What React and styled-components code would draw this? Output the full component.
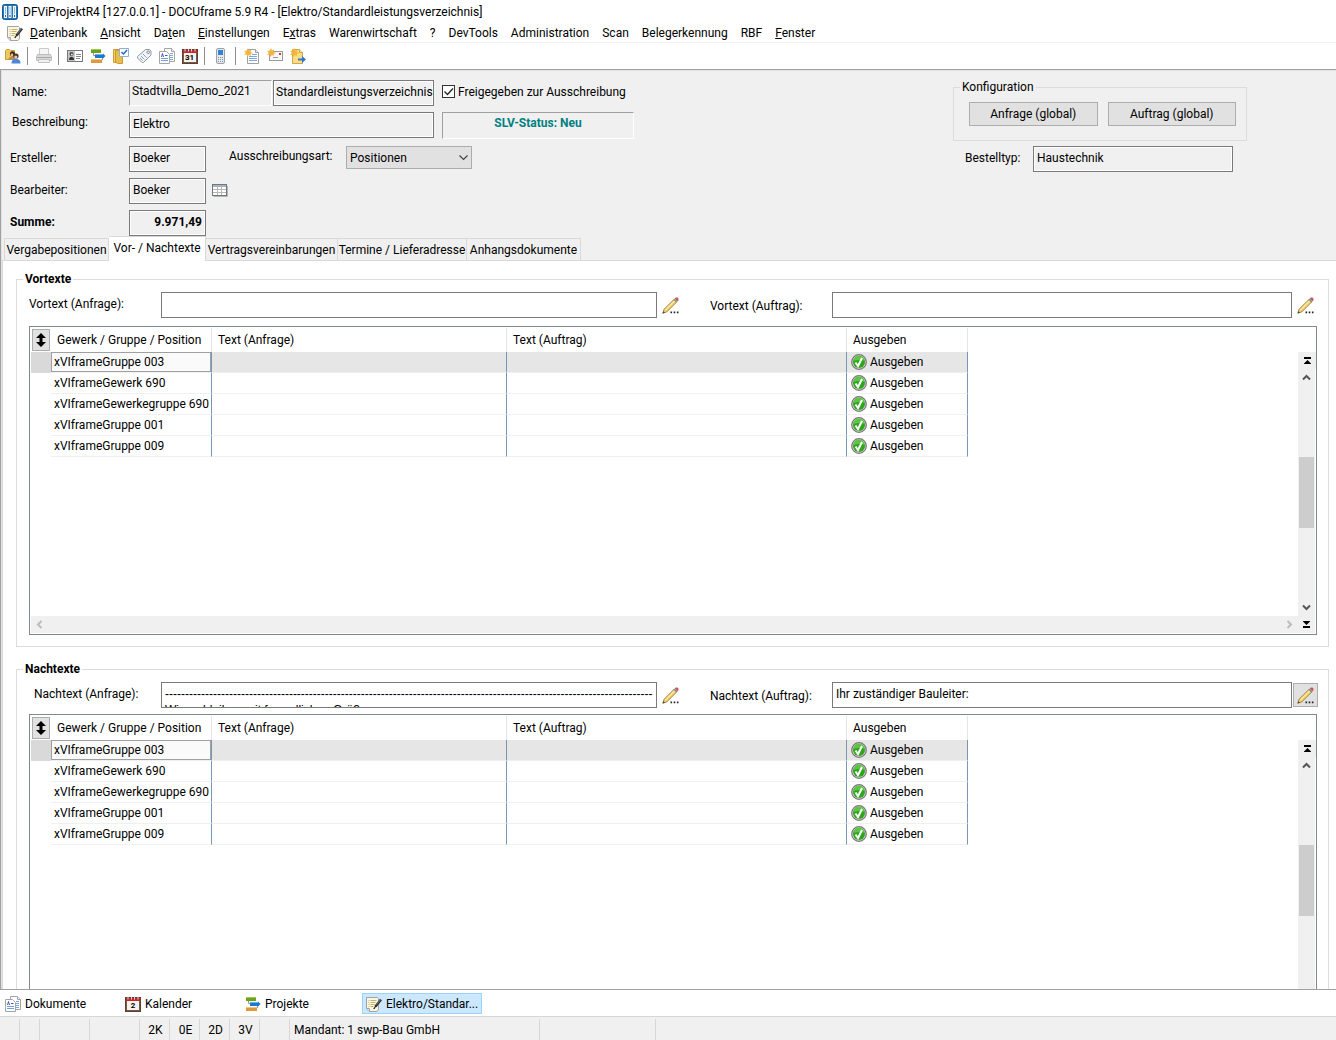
import React from "react";
import styled, { createGlobalStyle, css } from "styled-components";

const GlobalStyle = createGlobalStyle`
  *, *::before, *::after { box-sizing: border-box; }
  body {
    margin: 0;
    background: #fff;
    color: #000;
    font: 12px/16px Roboto, "Open Sans", sans-serif;
  }
  button, input, select, textarea {
    font: inherit;
    color: inherit;
    margin: 0;
    border-radius: 0;
  }
  svg { flex: none; }
`;

/* ---------- window frame ---------- */

const Window = styled.div`
  display: flex;
  flex-direction: column;
  height: 100vh;
  overflow: hidden;
`;

const TitleBar = styled.header`
  display: flex;
  align-items: center;
  gap: 5px;
  height: 24px;
  padding-left: 2px;
  flex: none;
`;

const Title = styled.h1`
  margin: 0;
  font-size: 12px;
  font-weight: 400;
  white-space: nowrap;
`;

const MenuBar = styled.nav`
  display: flex;
  align-items: center;
  height: 19px;
  padding-left: 7px;
  flex: none;
  border-bottom: 1px solid #f0f0f0;
`;

const MenuItem = styled.button`
  border: 0;
  padding: 0 6px 0 7px;
  background: none;
  line-height: 18px;
  white-space: nowrap;
`;

const ToolBar = styled.div`
  display: flex;
  align-items: center;
  height: 26px;
  padding-left: 1px;
  flex: none;
`;

const ToolButton = styled.button`
  display: grid;
  place-items: center;
  width: 23px;
  height: 22px;
  padding: 0;
  border: 0;
  background: none;
`;

const ToolDivider = styled.span`
  width: 1px;
  height: 18px;
  margin: 0 4px 0 3px;
  background: #8d8d8d;
`;

const Workspace = styled.main`
  flex: 1;
  min-height: 0;
  display: flex;
  flex-direction: column;
  overflow: hidden;
  background: #f0f0f0;
  border-top: 1px solid #a0a0a0;
  border-left: 1px solid #a0a0a0;
  border-bottom: 1px solid #a0a0a0;
  box-shadow: inset 1px 1px 0 #e3e3e3;
`;

/* ---------- head form ---------- */

const FormHead = styled.section`
  display: flex;
  justify-content: space-between;
  padding: 10px 89px 0 9px;
  flex: none;
`;

const FormColumn = styled.div`
  display: flex;
  flex-direction: column;
  gap: 6px;
`;

const FormRow = styled.div`
  display: flex;
  align-items: flex-start;
  height: 26px;
  margin-bottom: ${(p) => (p.$spaced ? "2px" : "0")};
`;

const labelLines = { tight: "20px", normal: "24px", low: "28px" };

const Label = styled.label`
  flex: none;
  width: ${(p) => p.$width || "auto"};
  padding-left: ${(p) => p.$indent || "0"};
  line-height: ${(p) => labelLines[p.$line || "normal"]};
  font-weight: ${(p) => (p.$bold ? 700 : 400)};
  white-space: nowrap;
`;

const TextField = styled.input`
  width: ${(p) => p.$width};
  height: 26px;
  padding: 0 3px 2px;
  border: 1px solid #7a7a7a;
  box-shadow: inset 0 0 0 1px #fff;
  background: #f0f0f0;
  outline: 0;
  font-weight: ${(p) => (p.$bold ? 700 : 400)};
  text-align: ${(p) => (p.$bold ? "right" : "left")};
`;

const SunkenField = styled(TextField)`
  margin-right: 1px;
  padding: 0 2px 4px;
  border-color: #a0a0a0 #fff #fff #a0a0a0;
  box-shadow: none;
`;

const KindField = styled(TextField)`
  padding: 0 0 2px 2px;
`;

const StatusBox = styled.output`
  width: 192px;
  height: 27px;
  margin-left: 8px;
  border: 1px solid;
  border-color: #a0a0a0 #fff #fff #a0a0a0;
  color: #008080;
  font-weight: 700;
  line-height: 20px;
  text-align: center;
`;

const CheckBox = styled.span`
  display: grid;
  margin: 5px 3px 0 8px;
  & > * { grid-area: 1 / 1; }
  input {
    appearance: none;
    width: 13px;
    height: 13px;
    border: 1px solid #333;
    background: #fff;
  }
  svg { pointer-events: none; }
`;

const SelectBox = styled.span`
  display: grid;
  align-items: center;
  width: 126px;
  & > * { grid-area: 1 / 1; }
  select {
    appearance: none;
    height: 23px;
    padding: 0 20px 0 3px;
    border: 1px solid #adadad;
    background: #e1e1e1;
    outline: 0;
  }
  svg { justify-self: end; margin-right: 4px; pointer-events: none; }
`;

const IconButton = styled.button`
  display: grid;
  place-items: center;
  padding: 0;
  border: 0;
  background: none;
  width: 24px;
  height: 24px;
  margin-left: 2px;
`;

const ConfigBox = styled.fieldset`
  display: flex;
  gap: 10px;
  width: 294px;
  height: 61px;
  margin: 0 0 -1px;
  padding: 8px 10px 0 15px;
  border: 1px solid #dcdcdc;
  legend {
    margin-left: -9px;
    padding: 0 2px;
    line-height: 14px;
  }
`;

const PushButton = styled.button`
  flex: 1;
  height: 24px;
  padding: 0;
  border: 1px solid #adadad;
  background: #e1e1e1;
`;

/* ---------- tabs ---------- */

const TabList = styled.div`
  display: flex;
  align-items: flex-end;
  height: 24px;
  padding-left: 3px;
  flex: none;
`;

const Tab = styled.button`
  width: ${(p) => p.$width};
  height: 22px;
  padding: 0;
  border: 1px solid #d9d9d9;
  border-width: 1px 1px 0 0;
  background: #f0f0f0;
  white-space: nowrap;
  text-align: center;
  &:first-child { border-left-width: 1px; }
  ${(p) =>
    p.$active &&
    css`
      height: 25px;
      margin-bottom: -1px;
      padding-bottom: 2px;
      background: #fff;
      z-index: 1;
    `}
`;

const TabPanel = styled.section`
  flex: 1;
  min-height: 0;
  margin-left: 1px;
  padding: 10px 7px 0 13px;
  display: flex;
  flex-direction: column;
  gap: 14px;
  overflow: hidden;
  background: #fff;
  border: 1px solid #d9d9d9;
  border-width: 1px 0 0 1px;
`;

const Group = styled.fieldset`
  flex: none;
  min-width: 0;
  margin: 0;
  padding: 5px 11px 11px 12px;
  border: 1px solid #dcdcdc;
  legend {
    margin-left: -6px;
    padding: 0 2px;
    font-weight: 700;
    line-height: 16px;
  }
`;

const TextRow = styled.div`
  display: grid;
  grid-template-columns: 132px minmax(0, 496fr) 53px 122px minmax(0, 460fr) 25px;
  height: 26px;
  margin-bottom: ${(p) => p.$gap};
`;

const TextArea = styled.textarea`
  height: 26px;
  padding: 3px;
  border: 1px solid #7a7a7a;
  background: #fff;
  outline: 0;
  resize: none;
  overflow: hidden;
  white-space: pre;
  line-height: 16px;
`;

const LetterArea = styled(TextArea)`
  font-family: "Liberation Sans", sans-serif;
`;

const PencilButton = styled.button`
  display: grid;
  place-items: center;
  width: 25px;
  height: 24px;
  margin: 1px 0 0 1px;
  padding: 0;
  border: 1px solid ${(p) => (p.$raised ? "#adadad" : "transparent")};
  background: ${(p) => (p.$raised ? "#e1e1e1" : "none")};
`;

/* ---------- data grid ---------- */

const GridFrame = styled.div`
  display: grid;
  grid-template-columns: minmax(0, 1fr) 17px;
  grid-template-rows: 288px 17px;
  padding: 1px;
  border: 1px solid #828790;
`;

const GridTable = styled.table`
  width: 937px;
  table-layout: fixed;
  border-collapse: separate;
  border-spacing: 0;
  th, td {
    padding: 0 0 0 3px;
    text-align: left;
    font-weight: 400;
    white-space: nowrap;
    overflow: hidden;
  }
  thead th {
    height: 24px;
    padding: 0 6px;
    border-right: 1px solid #e5e5e5;
  }
  thead th:first-child {
    padding: 1px;
    border-right: 0;
  }
`;

const DataRow = styled.tr`
  td {
    height: 21px;
    border-right: 1px solid #7b96b5;
    border-bottom: 1px solid #f0f0f0;
    background: ${(p) => (p.$current ? "#e6e6e6" : "#fff")};
  }
  td:first-child {
    border-right: 0;
    border-bottom-color: ${(p) => (p.$current ? "#d9d9d9" : "#fff")};
    background: ${(p) => (p.$current ? "#d9d9d9" : "#fff")};
  }
  td:nth-child(2) {
    ${(p) =>
      p.$current &&
      css`
        background: #fafafa;
        box-shadow: inset 0 0 0 1px #a0a0a0;
      `}
  }
`;

const StateCell = styled.span`
  display: flex;
  align-items: center;
  gap: 3px;
  margin-left: 1px;
`;

const SortButton = styled.button`
  display: grid;
  place-items: center;
  width: 18px;
  height: 22px;
  padding: 0;
  border: 1px solid #adadad;
  background: #e1e1e1;
`;

const VerticalScroll = styled.div`
  display: flex;
  flex-direction: column;
  margin-top: 24px;
  padding-left: 1px;
  background: #f0f0f0;
`;

const HorizontalScroll = styled.div`
  display: flex;
  justify-content: space-between;
  background: #f0f0f0;
`;

const ScrollButton = styled.button`
  display: grid;
  place-items: center;
  width: ${(p) => (p.$slim ? "15px" : "17px")};
  height: 17px;
  padding: 0;
  border: 0;
  background: #f0f0f0;
`;

const ScrollTrack = styled.div`
  flex: 1;
  display: grid;
  grid-template-rows: 1fr 1fr 1fr;
`;

const ScrollThumb = styled.div`
  grid-row: 2;
  width: 15px;
  background: #cdcdcd;
`;

/* ---------- bottom bars ---------- */

const TaskBar = styled.nav`
  display: flex;
  align-items: center;
  height: 26px;
  padding-left: 1px;
  flex: none;
`;

const TaskButton = styled.button`
  display: flex;
  align-items: center;
  gap: 4px;
  width: 120px;
  height: 21px;
  padding: 1px 3px 0;
  border: 1px solid ${(p) => (p.$active ? "#99d1ff" : "transparent")};
  margin-left: ${(p) => (p.$active ? "1px" : "0")};
  background: ${(p) => (p.$active ? "#cce8ff" : "none")};
  white-space: nowrap;
`;

const StatusBar = styled.footer`
  display: flex;
  height: 24px;
  padding-top: 2px;
  flex: none;
  background: #f0f0f0;
  border-top: 1px solid #d7d7d7;
`;

const StatusCell = styled.span`
  width: ${(p) => p.$width};
  padding-left: ${(p) => (p.$wide ? "4px" : "2px")};
  border-right: 1px solid #d7d7d7;
  line-height: 22px;
  text-align: ${(p) => (p.$wide ? "left" : "center")};
  white-space: nowrap;
`;

/* ---------- icons ---------- */

const Svg = ({ children, size = 16 }) => (
  <svg width={size} height={size} viewBox="0 0 16 16" aria-hidden="true">
    {children}
  </svg>
);

const AppIcon = () => (
  <Svg>
    <rect x="0.5" y="0.5" width="15" height="15" rx="2" fill="#2477b8" stroke="#1a5a92" />
    {[2, 6.5, 11].map((x) => (
      <g key={x}>
        <rect x={x} y="2" width="3" height="12" fill="#f2f8fd" />
        <rect x={x + 1} y="3" width="1" height="7" fill="#8fc0e6" />
        <rect x={x + 1} y="11" width="1" height="2" fill="#1766a8" />
      </g>
    ))}
  </Svg>
);

const NoteIcon = () => (
  <Svg>
    <path d="M0.5 1.5h11l1 1v11l-1.5 2H3l-2.500-3z" fill="#faf6e4" stroke="#a3a3a3" />
    <path d="M0.500 12.500h3v3" fill="#e3e3e3" stroke="#a3a3a3" />
    <path d="M2.500 4.500h1M4.500 4.500h6M2.500 6.500h1M4.500 6.500h5M2.500 8.500h1M4.500 8.500h4M2.500 10.500h1M4.500 10.500h3" stroke="#c9b26a" />
    <path d="M15 3.500L9.500 10.500" stroke="#333" strokeWidth="2.600" fill="none" />
    <path d="M9.800 10l-2 3" stroke="#222" strokeWidth="1.300" />
    <path d="M14.500 3.500l-4 5" stroke="#8b8b8b" strokeWidth="0.800" />
  </Svg>
);

const UsersIcon = () => (
  <Svg>
    <path d="M0.500 2.500l1-1h3l1 1h4v9h-9z" fill="#efca5a" stroke="#c9a03a" />
    <path d="M3.500 12c0-2 1-3.500 3.500-3.500S10 10 10 12z" fill="#b98a5a" />
    <circle cx="7.500" cy="5.800" r="2.600" fill="#3d2c1d" />
    <circle cx="7" cy="7" r="1.400" fill="#e9bb90" />
    <circle cx="11" cy="8" r="2.600" fill="#4a3420" />
    <circle cx="10.800" cy="9" r="1.600" fill="#edc49c" />
    <path d="M6.500 15.500c0-3.500 2-4.500 4.500-4.500s4.500 1 4.500 4.500z" fill="#4a86dc" />
  </Svg>
);

const PrinterIcon = () => (
  <Svg>
    <path d="M3.500 0.500h9v6h-9z" fill="#f7f7f7" stroke="#c9c9c9" />
    <path d="M1.500 6.500h13l1 2v4h-15v-4z" fill="#d9d9d9" stroke="#bdbdbd" />
    <path d="M1 9.500h14" stroke="#a8a8a8" />
    <path d="M2.500 11.500h11v3h-11z" fill="#f2f2f2" stroke="#c2c2c2" />
  </Svg>
);

const CardIcon = () => (
  <Svg>
    <rect x="0.500" y="2.500" width="15" height="11" fill="#fff" stroke="#777" />
    <rect x="1" y="3" width="7" height="10" fill="#c6c6c6" />
    <circle cx="4.500" cy="6" r="2" fill="#444" />
    <circle cx="4.800" cy="6.500" r="1" fill="#ddd" />
    <path d="M2 12c0-2.500 1-3.200 2.500-3.200S7 9.500 7 12z" fill="#333" />
    <path d="M9 6.500h5M9 8.500h5M9 10.500h4" stroke="#8a8a8a" />
  </Svg>
);

const ProjectIcon = () => (
  <Svg>
    <rect x="1" y="1" width="10" height="4" fill="#6ba31c" />
    <rect x="1" y="1" width="10" height="1" fill="#9cc94e" />
    <path d="M3.500 5v2.500h2M12.500 9v3" stroke="#999" fill="none" />
    <rect x="5" y="6" width="8.500" height="4" fill="#1d78cf" />
    <path d="M13 5.500l2.500 2.500-2.500 2.500z" fill="#1d78cf" />
    <rect x="5" y="6" width="8" height="1" fill="#6db3ee" />
    <rect x="1" y="11" width="11" height="4" fill="#dc9a3c" />
    <rect x="1" y="11" width="11" height="1" fill="#f2c584" />
  </Svg>
);

const PlanIcon = () => (
  <Svg>
    <path d="M0.500 1.500h7v13h-7z" fill="#f5cf63" stroke="#cf9f2b" />
    <path d="M2.500 2.500h7v13h-5l-2-1.500z" fill="#e9bd4b" stroke="#c79a35" />
    <path d="M6.500 0.500h9v8h-9z" fill="#fff" stroke="#8fb0cf" />
    <path d="M8.500 4l2 2 3.500-4" stroke="#1f68c0" strokeWidth="1.500" fill="none" />
  </Svg>
);

const TagIcon = () => (
  <Svg>
    <path d="M9.500 1.500h4l1.500 1.500v4L7.500 14.500H6l-4.500-4.500V8.500z" fill="#f1f4f7" stroke="#8d99a5" />
    <circle cx="12.200" cy="4.200" r="1.300" fill="#fff" stroke="#7d8894" />
    <path d="M5 8l3.500 3.500M7 6l3.500 3.500M4 10l2.500 2.500" stroke="#8fa5bb" />
  </Svg>
);

const DocsIcon = () => (
  <Svg>
    <path d="M5.500 0.500h7l3 3v10h-10z" fill="#fff" stroke="#a5a5a5" />
    <path d="M12.500 0.500v3h3" fill="#eee" stroke="#a5a5a5" />
    <path d="M11 5.500h3M11 7.500h3M11 9.500h3M11 11.500h3" stroke="#7aa6dd" />
    <path d="M0.500 3.500h7l3 3v9h-10z" fill="#fff" stroke="#a5a5a5" />
    <path d="M2.500 9l1-3.500 1 3.500M6 7.500h2.500" stroke="#4a51c8" fill="none" />
    <path d="M2 10.500h7M2 12.500h7" stroke="#6f9fdc" />
  </Svg>
);

const CalendarGlyph = styled.span`
  display: grid;
  flex: none;
  width: 16px;
  height: 16px;
  & > * { grid-area: 1 / 1; }
  b {
    padding-top: 4px;
    font-size: 8px;
    line-height: 11px;
    text-align: center;
  }
`;

const CalendarIcon = ({ day }) => (
  <CalendarGlyph aria-hidden="true">
    <Svg>
      <rect x="0.500" y="1.500" width="15" height="14" fill="#7a5848" stroke="#5d4034" />
      <rect x="1" y="2" width="14" height="3" fill="#c5272d" />
      <path d="M3 0.500v3M6.500 0.500v3M9.500 0.500v3M13 0.500v3" stroke="#d8d8d8" />
      <rect x="2" y="5" width="12" height="9" fill="#f6f3ee" />
    </Svg>
    <b>{day}</b>
  </CalendarGlyph>
);

const PhoneIcon = () => (
  <Svg>
    <rect x="3.500" y="0.500" width="8" height="15" rx="1.500" fill="#e4e8ec" stroke="#9aa1a8" />
    <rect x="5" y="2" width="5" height="5" fill="#3683d6" />
    <path d="M5 9.500h1M7 9.500h1M9 9.500h1M5 11.500h1M7 11.500h1M9 11.500h1M5 13.500h1M7 13.500h1M9 13.500h1" stroke="#8d969e" />
  </Svg>
);

const Spark = () => (
  <path
    d="M4 0l1 2.500L7.500 1.500 6.500 4 9 5 6.500 6 7 8 4.800 7 3.500 9 2.800 6.500 0 7 1.800 4.800 0 3l2.500-.2z"
    fill="#f3b340"
  />
);

const NewDocIcon = () => (
  <Svg>
    <path d="M3.500 1.500h8l3 3v11h-11z" fill="#fff" stroke="#a0a0a0" />
    <path d="M11.500 1.500v3h3" fill="#eee" stroke="#a0a0a0" />
    <path d="M8 6.500h5M5 8.500h8M5 10.500h8M5 12.500h8" stroke="#7ea6dd" />
    <Spark />
  </Svg>
);

const NewMailIcon = () => (
  <Svg>
    <rect x="2.500" y="3.500" width="13" height="9" fill="#f7f7f7" stroke="#999" />
    <rect x="12" y="5" width="2" height="2" fill="#d23b32" />
    <path d="M6 9.500h5" stroke="#999" />
    <Spark />
  </Svg>
);

const NewExportIcon = () => (
  <Svg>
    <path d="M2.500 1.500h7l3 3v11h-10z" fill="#f8dc86" stroke="#cfa844" />
    <path d="M9.500 1.500v3h3" fill="#fdf0c0" stroke="#cfa844" />
    <path d="M8 10.500h4V8l4 3.500-4 3.500v-2.500H8z" fill="#2f76d2" />
    <Spark />
  </Svg>
);

const TableIcon = () => (
  <Svg>
    <path d="M1.500 14.500h14V4" fill="none" stroke="#b5b5b5" />
    <rect x="0.500" y="2.500" width="14" height="11" fill="#fff" stroke="#6f7780" />
    <rect x="1" y="3" width="13" height="2" fill="#a9b3bd" />
    <path d="M1 7.500h13M1 10.500h13M5.500 5v8M9.500 5v8" stroke="#b7b7b7" />
  </Svg>
);

const PencilIcon = () => (
  <Svg size={17}>
    <path d="M0.800 15.200L2 11.500 11.500 2l2.500 2.500L4.500 14z" fill="#f3ce6b" stroke="#9a7433" strokeWidth="0.800" />
    <path d="M3 12.500L12.500 3" stroke="#fdeeb0" />
    <path d="M10.800 2.700l1.200-1.200 2.500 2.500-1.200 1.200z" fill="#6f9c96" />
    <path d="M12 1.500l1-1h1.500l1 1V3l-1 1z" fill="#d4545c" />
    <path d="M0.500 15.500l0.800-2.200 1.500 1.500z" fill="#444" />
    <path d="M8 14.500h1.500M11 14.500h1.500M14 14.500h1.500" stroke="#222" strokeWidth="1.500" />
  </Svg>
);

const OkIcon = () => (
  <Svg>
    <circle cx="8" cy="8" r="7.300" fill="#d6d6d6" stroke="#777" strokeWidth="1.200" />
    <circle cx="8" cy="8" r="6" fill="#2fa51c" />
    <path d="M2.500 7a5.500 5.500 0 0 1 11 0c-3-1.500-7-1-11 0z" fill="#5cc544" />
    <path d="M4.500 8.500l2.500 3.500 4-8" stroke="#fff" strokeWidth="2" fill="none" />
  </Svg>
);

const TickMark = () => (
  <svg width="13" height="13" viewBox="0 0 13 13" aria-hidden="true">
    <path d="M2.500 6.500l3 3 5.500-6" stroke="#222" strokeWidth="1.300" fill="none" />
  </svg>
);

const SortIcon = () => (
  <svg width="10" height="14" viewBox="0 0 10 14" aria-hidden="true">
    <path d="M5 0l5 5H6.500v4H10l-5 5-5-5h3.500V5H0z" fill="#000" />
  </svg>
);

const arrowTurns = { up: 0, right: 90, down: 180, left: 270 };

const Arrow = ({ to, color = "#555" }) => (
  <svg width="9" height="9" viewBox="0 0 9 9" aria-hidden="true">
    <path
      d="M1 6.500L4.500 3L8 6.500"
      stroke={color}
      strokeWidth="2"
      fill="none"
      transform={`rotate(${arrowTurns[to]} 4.500 4.500)`}
    />
  </svg>
);

const DropArrow = () => (
  <svg width="9" height="6" viewBox="0 0 9 6" aria-hidden="true">
    <path d="M0.500 0.500l4 4 4-4" stroke="#444" strokeWidth="1.200" fill="none" />
  </svg>
);

const EndArrow = ({ to }) => (
  <svg width="7" height="7" viewBox="0 0 7 7" aria-hidden="true">
    <path d="M0 0h7v2H0zM3.500 3L7 6.500v.500H0v-.500z" fill="#000" transform={to === "down" ? "rotate(180 3.500 3.500)" : undefined} />
  </svg>
);

/* ---------- content ---------- */

const menu = [
  ["", "D", "atenbank"],
  ["", "A", "nsicht"],
  ["Da", "t", "en"],
  ["", "E", "instellungen"],
  ["E", "x", "tras"],
  ["Warenwirtschaft"],
  ["?"],
  ["DevTools"],
  ["Administration"],
  ["Scan"],
  ["Belegerkennung"],
  ["RBF"],
  ["", "F", "enster"],
];

const tools = [
  ["Anmelden", <UsersIcon />],
  null,
  ["Drucken", <PrinterIcon />],
  null,
  ["Adressen", <CardIcon />],
  ["Projekte", <ProjectIcon />],
  ["Aufgaben", <PlanIcon />],
  ["Artikel", <TagIcon />],
  ["Dokumente", <DocsIcon />],
  ["Kalender", <CalendarIcon day="31" />],
  null,
  ["Telefon", <PhoneIcon />],
  null,
  ["Neues Dokument", <NewDocIcon />],
  ["Neue Nachricht", <NewMailIcon />],
  ["Neuer Export", <NewExportIcon />],
];

const tabs = [
  ["Vergabepositionen", "105px"],
  ["Vor- / Nachtexte", "97px"],
  ["Vertragsvereinbarungen", "132px"],
  ["Termine / Lieferadresse", "129px"],
  ["Anhangsdokumente", "114px"],
];

const positions = [
  "xVIframeGruppe 003",
  "xVIframeGewerk 690",
  "xVIframeGewerkegruppe 690",
  "xVIframeGruppe 001",
  "xVIframeGruppe 009",
];

const closing = "-".repeat(122) + "\nWir verbleiben mit freundlichen Grüßen";

const statusCells = [
  ["20px"], ["20px"], ["50px"], ["50px"],
  ["30px", "2K"], ["30px", "0E"], ["30px", "2D"], ["30px", "3V"], ["30px"],
  ["250px", "Mandant: 1 swp-Bau GmbH"], ["116px"],
];

const PositionGrid = ({ name }) => (
  <GridFrame>
    <div>
      <GridTable aria-label={name}>
        <colgroup>
          <col width="20" />
          <col width="161" />
          <col width="295" />
          <col width="340" />
          <col width="121" />
        </colgroup>
        <thead>
          <tr>
            <th>
              <SortButton type="button" aria-label="Sortieren"><SortIcon /></SortButton>
            </th>
            <th>Gewerk / Gruppe / Position</th>
            <th>Text (Anfrage)</th>
            <th>Text (Auftrag)</th>
            <th>Ausgeben</th>
          </tr>
        </thead>
        <tbody>
          {positions.map((position, i) => (
            <DataRow key={position} $current={i === 0}>
              <td />
              <td>{position}</td>
              <td />
              <td />
              <td><StateCell><OkIcon />Ausgeben</StateCell></td>
            </DataRow>
          ))}
        </tbody>
      </GridTable>
    </div>
    <VerticalScroll>
      <ScrollButton type="button" aria-label="Zum Anfang"><EndArrow to="up" /></ScrollButton>
      <ScrollButton type="button" $slim aria-label="Nach oben"><Arrow to="up" /></ScrollButton>
      <ScrollTrack><ScrollThumb /></ScrollTrack>
      <ScrollButton type="button" $slim aria-label="Nach unten"><Arrow to="down" /></ScrollButton>
    </VerticalScroll>
    <HorizontalScroll>
      <ScrollButton type="button" aria-label="Nach links"><Arrow to="left" color="#bbb" /></ScrollButton>
      <ScrollButton type="button" aria-label="Nach rechts"><Arrow to="right" color="#bbb" /></ScrollButton>
    </HorizontalScroll>
    <ScrollButton type="button" aria-label="Zum Ende"><EndArrow to="down" /></ScrollButton>
  </GridFrame>
);

const TextGroup = ({ title, kind, indent, gap, request, order, raised }) => (
  <Group>
    <legend>{title}</legend>
    <TextRow $gap={gap}>
      <Label htmlFor={`${kind}-anfrage`} $indent={indent}>{kind} (Anfrage):</Label>
      <LetterArea id={`${kind}-anfrage`} defaultValue={request} />
      <PencilButton type="button" aria-label={`${kind} (Anfrage) bearbeiten`}><PencilIcon /></PencilButton>
      <Label htmlFor={`${kind}-auftrag`} $line="low">{kind} (Auftrag):</Label>
      <TextArea id={`${kind}-auftrag`} defaultValue={order} />
      <PencilButton type="button" $raised={raised} aria-label={`${kind} (Auftrag) bearbeiten`}><PencilIcon /></PencilButton>
    </TextRow>
    <PositionGrid name={title} />
  </Group>
);

export default function App() {
  return (
    <Window>
      <GlobalStyle />
      <TitleBar>
        <AppIcon />
        <Title>DFViProjektR4 [127.0.0.1] - DOCUframe 5.9 R4 - [Elektro/Standardleistungsverzeichnis]</Title>
      </TitleBar>
      <MenuBar>
        <NoteIcon />
        {menu.map(([before, key, after]) => (
          <MenuItem type="button" key={before + key}>
            {before}{key && <u>{key}</u>}{after}
          </MenuItem>
        ))}
      </MenuBar>
      <ToolBar>
        {tools.map((tool, i) =>
          tool ? (
            <ToolButton type="button" key={i} aria-label={tool[0]}>{tool[1]}</ToolButton>
          ) : (
            <ToolDivider key={i} />
          )
        )}
      </ToolBar>

      <Workspace>
        <FormHead>
          <FormColumn>
            <FormRow>
              <Label htmlFor="name" $width="119px" $indent="2px">Name:</Label>
              <SunkenField id="name" $width="143px" readOnly value="Stadtvilla_Demo_2021" />
              <KindField aria-label="Art" $width="161px" readOnly value="Standardleistungsverzeichnis" />
              <CheckBox>
                <input id="release" type="checkbox" defaultChecked />
                <TickMark />
              </CheckBox>
              <Label htmlFor="release">Freigegeben zur Ausschreibung</Label>
            </FormRow>
            <FormRow $spaced>
              <Label htmlFor="description" $width="119px" $indent="2px" $line="tight">Beschreibung:</Label>
              <TextField id="description" $width="305px" readOnly value="Elektro" />
              <StatusBox>SLV-Status: Neu</StatusBox>
            </FormRow>
            <FormRow>
              <Label htmlFor="creator" $width="119px">Ersteller:</Label>
              <TextField id="creator" $width="77px" readOnly value="Boeker" />
              <Label htmlFor="kind" $width="140px" $indent="23px" $line="tight">Ausschreibungsart:</Label>
              <SelectBox>
                <select id="kind" defaultValue="Positionen">
                  <option>Positionen</option>
                </select>
                <DropArrow />
              </SelectBox>
            </FormRow>
            <FormRow>
              <Label htmlFor="editor" $width="119px">Bearbeiter:</Label>
              <TextField id="editor" $width="77px" readOnly value="Boeker" />
              <IconButton type="button" aria-label="Bearbeiter wählen"><TableIcon /></IconButton>
            </FormRow>
            <FormRow>
              <Label htmlFor="total" $width="119px" $bold>Summe:</Label>
              <TextField id="total" $width="77px" $bold readOnly value="9.971,49" />
            </FormRow>
          </FormColumn>
          <FormColumn>
            <ConfigBox>
              <legend>Konfiguration</legend>
              <PushButton type="button">Anfrage (global)</PushButton>
              <PushButton type="button">Auftrag (global)</PushButton>
            </ConfigBox>
            <FormRow>
              <Label htmlFor="ordertype" $width="80px" $indent="12px">Bestelltyp:</Label>
              <TextField id="ordertype" $width="200px" readOnly value="Haustechnik" />
            </FormRow>
          </FormColumn>
        </FormHead>

        <TabList role="tablist">
          {tabs.map(([text, width], i) => (
            <Tab type="button" role="tab" key={text} $width={width} $active={i === 1} aria-selected={i === 1}>
              {text}
            </Tab>
          ))}
        </TabList>
        <TabPanel>
          <TextGroup title="Vortexte" kind="Vortext" indent="0" gap="8px" request="" order="" />
          <TextGroup
            title="Nachtexte"
            kind="Nachtext"
            indent="5px"
            gap="6px"
            request={closing}
            order="Ihr zuständiger Bauleiter:"
            raised
          />
        </TabPanel>
      </Workspace>

      <TaskBar>
        <TaskButton type="button"><DocsIcon />Dokumente</TaskButton>
        <TaskButton type="button"><CalendarIcon day="2" />Kalender</TaskButton>
        <TaskButton type="button"><ProjectIcon />Projekte</TaskButton>
        <TaskButton type="button" $active><NoteIcon />Elektro/Standar...</TaskButton>
      </TaskBar>
      <StatusBar>
        {statusCells.map(([width, text], i) => (
          <StatusCell key={i} $width={width} $wide={width === "250px"}>{text}</StatusCell>
        ))}
      </StatusBar>
    </Window>
  );
}
